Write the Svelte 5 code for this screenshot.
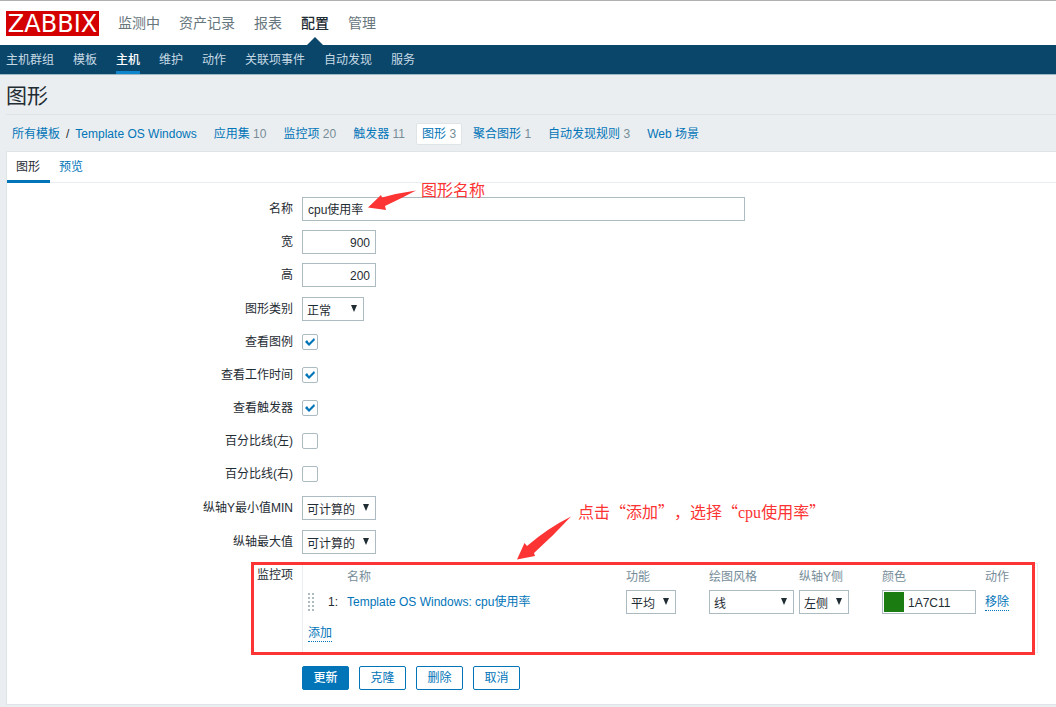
<script>
    const menu = ["监测中", "资产记录", "报表", "配置", "管理"];
    const submenu = ["主机群组", "模板", "主机", "维护", "动作", "关联项事件", "自动发现", "服务"];

    const sections = [
        { label: "应用集", count: 10 },
        { label: "监控项", count: 20 },
        { label: "触发器", count: 11 },
        { label: "图形", count: 3, selected: true },
        { label: "聚合图形", count: 1 },
        { label: "自动发现规则", count: 3 },
        { label: "Web 场景" },
    ];

    let name = "cpu使用率";
    let width = "900";
    let height = "200";
    let color = "1A7C11";

    let checks = [
        { id: "legend", label: "查看图例", checked: true },
        { id: "worktime", label: "查看工作时间", checked: true },
        { id: "triggers", label: "查看触发器", checked: true },
        { id: "percent-left", label: "百分比线(左)", checked: false },
        { id: "percent-right", label: "百分比线(右)", checked: false },
    ];
</script>

<div class="page" lang="zh-CN">
    <header class="top">
        <a class="logo" href="#home">ZABBIX</a>
        <nav class="menu">
            {#each menu as item}
                <a href="#menu" class:selected={item === "配置"}>{item}</a>
            {/each}
        </nav>
    </header>

    <nav class="submenu">
        {#each submenu as item}
            <a href="#submenu" class:selected={item === "主机"}>{item}</a>
        {/each}
    </nav>

    <main>
        <h1>图形</h1>

        <nav class="crumbs">
            <span class="path">
                <a href="#templates">所有模板</a>
                <span>/</span>
                <a href="#template">Template OS Windows</a>
            </span>
            {#each sections as section}
                <span class="section" class:selected={section.selected}>
                    <a href="#section">{section.label}</a>
                    {#if section.count}<span class="count">{section.count}</span>{/if}
                </span>
            {/each}
        </nav>

        <div class="card">
            <nav class="tabs">
                <a href="#graph" class="selected">图形</a>
                <a href="#preview">预览</a>
            </nav>

            <form on:submit|preventDefault>
                <div class="field">
                    <label for="name">名称</label>
                    <div class="control">
                        <input id="name" class="wide" type="text" bind:value={name} />
                        <div class="note note-name">
                            <svg width="48" height="20" viewBox="0 0 48 20" aria-hidden="true">
                                <path d="M0 17.5 L13 5 L14 7.5 Q30 3 48 0.5 Q34 8 17 16 L18 20 Z" />
                            </svg>
                            <span>图形名称</span>
                        </div>
                    </div>
                </div>
                <div class="field">
                    <label for="width">宽</label>
                    <div class="control"><input id="width" class="number" type="text" bind:value={width} /></div>
                </div>
                <div class="field">
                    <label for="height">高</label>
                    <div class="control"><input id="height" class="number" type="text" bind:value={height} /></div>
                </div>
                <div class="field with-select">
                    <label for="type">图形类别</label>
                    <div class="control">
                        <span class="select type"><select id="type"><option>正常</option></select></span>
                    </div>
                </div>

                {#each checks as check}
                    <div class="field">
                        <label for={check.id}>{check.label}</label>
                        <div class="control"><input id={check.id} type="checkbox" bind:checked={check.checked} /></div>
                    </div>
                {/each}

                <div class="field with-select">
                    <label for="ymin">纵轴Y最小值MIN</label>
                    <div class="control">
                        <span class="select axis"><select id="ymin"><option>可计算的</option></select></span>
                    </div>
                </div>
                <div class="field with-select">
                    <label for="ymax">纵轴最大值</label>
                    <div class="control">
                        <span class="select axis"><select id="ymax"><option>可计算的</option></select></span>
                    </div>
                </div>

                <div class="field items">
                    <span class="label" id="items-label">监控项</span>
                    <div class="box">
                        <table aria-labelledby="items-label">
                            <colgroup>
                                <col class="c-drag" />
                                <col class="c-num" />
                                <col />
                                <col class="c-func" />
                                <col class="c-style" />
                                <col class="c-side" />
                                <col class="c-color" />
                                <col class="c-action" />
                            </colgroup>
                            <thead>
                                <tr>
                                    <th></th>
                                    <th></th>
                                    <th>名称</th>
                                    <th>功能</th>
                                    <th>绘图风格</th>
                                    <th>纵轴Y侧</th>
                                    <th>颜色</th>
                                    <th>动作</th>
                                </tr>
                            </thead>
                            <tbody>
                                <tr>
                                    <td><span class="drag"></span></td>
                                    <td>1:</td>
                                    <td><a href="#item">Template OS Windows: cpu使用率</a></td>
                                    <td>
                                        <span class="select short"><select aria-label="功能"><option>平均</option></select></span>
                                    </td>
                                    <td>
                                        <span class="select style"><select aria-label="绘图风格"><option>线</option></select></span>
                                    </td>
                                    <td>
                                        <span class="select short"><select aria-label="纵轴Y侧"><option>左侧</option></select></span>
                                    </td>
                                    <td>
                                        <span class="color">
                                            <span class="swatch" style="background: #{color}"></span>
                                            <input type="text" aria-label="颜色" bind:value={color} />
                                        </span>
                                    </td>
                                    <td><button type="button" class="link">移除</button></td>
                                </tr>
                                <tr class="add">
                                    <td colspan="8"><button type="button" class="link">添加</button></td>
                                </tr>
                            </tbody>
                        </table>
                        <div class="note note-items">
                            <svg width="54" height="44" viewBox="0 0 54 44" aria-hidden="true">
                                <path d="M0 43.5 L7.5 27 L10 30 Q31 12 54 0.5 Q37 19 17 37 L18 40 Z" />
                            </svg>
                            <span>点击“添加”，选择“<i>cpu</i>使用率”</span>
                        </div>
                    </div>
                    <div class="frame"></div>
                </div>

                <div class="buttons">
                    <button type="submit" class="primary">更新</button>
                    <button type="button">克隆</button>
                    <button type="button">删除</button>
                    <button type="button">取消</button>
                </div>
            </form>
        </div>
    </main>
</div>

<style>
    :global(body) {
        background: #ebeef0;
    }

    .page {
        color: #1f2c33;
        font: 12px/24px "Liberation Sans", "Noto Sans CJK SC", sans-serif;
        padding-bottom: 3px;
    }

    * {
        box-sizing: border-box;
    }

    a {
        color: #0275b8;
        text-decoration: none;
    }

    input, select, button {
        font: inherit;
        color: inherit;
        margin: 0;
    }

    .top {
        display: flex;
        align-items: center;
        gap: 19px;
        height: 45px;
        padding: 0 6px;
        border-top: 1px solid #b0b0b0;
        background: #fff;
    }

    .logo {
        width: 93px;
        height: 25px;
        background: #d40000;
        color: #fff;
        font: 24px/26px "DejaVu Sans", sans-serif;
        text-align: center;
    }

    .menu {
        display: flex;
        gap: 19px;
        font-size: 14px;
        line-height: 44px;
    }

    .menu a {
        position: relative;
        color: #67757c;
    }

    .menu .selected {
        color: #1f2c33;
        font-weight: 500;
    }

    .menu .selected::after {
        content: "";
        position: absolute;
        left: 50%;
        bottom: 0;
        margin-left: -8px;
        border: 8px solid transparent;
        border-top: 0;
        border-bottom-color: #0a466a;
    }

    .submenu {
        display: flex;
        gap: 19px;
        height: 30px;
        padding: 0 6px;
        border-bottom: 1px solid #9fb6c4;
        background: #0a466a;
        line-height: 30px;
    }

    .submenu a {
        height: 29px;
        color: #c6dae5;
    }

    .submenu .selected {
        border-bottom: 3px solid #0f85cd;
        color: #fff;
        font-weight: 500;
    }

    main {
        padding-left: 6px;
    }

    h1 {
        margin: 0;
        height: 40px;
        border-bottom: 1px solid #dfe4e7;
        font-size: 21px;
        font-weight: 400;
        line-height: 42px;
    }

    .crumbs {
        display: flex;
        align-items: center;
        gap: 5px;
        height: 36px;
        padding-top: 2px;
        line-height: 20px;
        white-space: nowrap;
    }

    .path {
        display: flex;
        gap: 6px;
        padding: 0 6px;
    }

    .section {
        padding: 0 5px;
        border: 1px solid transparent;
        border-radius: 2px;
    }

    .section.selected {
        border-color: #dfe4e7;
        background: #fff;
    }

    .count {
        color: #768d99;
    }

    .card {
        border: 1px solid #dfe4e7;
        border-right: 0;
        background: #fff;
    }

    .tabs {
        display: flex;
        height: 31px;
        border-bottom: 1px solid #ebeef0;
        line-height: 30px;
    }

    .tabs a {
        height: 31px;
        padding: 0 10px 0 9px;
    }

    .tabs .selected {
        border-bottom: 3px solid #0275b8;
        color: #1f2c33;
    }

    form {
        display: flex;
        flex-direction: column;
        gap: 9px;
        padding: 14px 18px 14px 0;
    }

    .field {
        display: grid;
        grid-template-columns: 286px 1fr;
        column-gap: 9px;
        position: relative;
        min-height: 24px;
    }

    .with-select {
        padding-top: 1px;
    }

    .field > label,
    .label {
        text-align: right;
    }

    .control {
        display: flex;
        align-items: center;
        position: relative;
        height: 24px;
    }

    input[type="text"] {
        height: 24px;
        padding: 1px 5px 0;
        border: 1px solid #acbbc2;
        background: #fff;
    }

    .wide {
        width: 443px;
        max-width: 100%;
    }

    .number {
        width: 74px;
        text-align: right;
    }

    input[type="checkbox"] {
        appearance: none;
        width: 16px;
        height: 16px;
        border: 1px solid #acbbc2;
        border-radius: 2px;
        background: #fff;
    }

    input[type="checkbox"]:checked::before {
        content: "";
        display: block;
        width: 14px;
        height: 14px;
        background: #0275b8;
        clip-path: polygon(2px 7px, 4px 5px, 6px 8px, 11px 3px, 12px 5px, 6px 11px);
    }

    .select {
        display: inline-block;
        position: relative;
        height: 24px;
        vertical-align: top;
    }

    .select::after {
        content: "";
        position: absolute;
        top: 8px;
        right: 7px;
        border: 3px solid transparent;
        border-top: 7px solid #1f2c33;
        border-bottom: 0;
        pointer-events: none;
    }

    .select select {
        appearance: none;
        width: 100%;
        height: 24px;
        padding: 1px 4px 0;
        border: 1px solid #acbbc2;
        border-radius: 0;
        background: #fff;
    }

    .type {
        width: 62px;
    }

    .axis {
        width: 74px;
    }

    .short {
        width: 50px;
    }

    .style {
        width: 85px;
    }

    .box {
        position: relative;
        padding-left: 5px;
        border: 1px solid #ebeef0;
    }

    table {
        width: 100%;
        table-layout: fixed;
        border-collapse: collapse;
    }

    th, td {
        height: 24px;
        padding: 0;
        text-align: left;
        vertical-align: middle;
        white-space: nowrap;
    }

    th {
        height: 26px;
        color: #768d99;
        font-weight: 400;
    }

    .add td {
        height: 38px;
    }

    .c-drag {
        width: 20px;
    }

    .c-num {
        width: 19px;
    }

    .c-func,
    .c-side {
        width: 83px;
    }

    .c-style {
        width: 90px;
    }

    .c-color {
        width: 103px;
    }

    .c-action {
        width: 52px;
    }

    .drag {
        display: block;
        width: 6px;
        height: 18px;
        background: conic-gradient(from 270deg at 2px 2px, #acbbc2 90deg, transparent 0) 0 0 / 4px 4px;
    }

    .color {
        display: flex;
        position: relative;
        width: 94px;
    }

    .color input[type="text"] {
        width: 100%;
        padding-left: 25px;
    }

    .swatch {
        position: absolute;
        top: 2px;
        left: 2px;
        width: 20px;
        height: 20px;
    }

    .link {
        padding: 0;
        border: 0;
        border-bottom: 1px dotted #0275b8;
        background: none;
        color: #0275b8;
        line-height: 15px;
    }

    .frame {
        position: absolute;
        top: -1px;
        right: 3px;
        bottom: -2px;
        left: 244px;
        border: 3px solid #fc3434;
        pointer-events: none;
    }

    .note {
        display: flex;
        position: absolute;
        color: #fc3434;
        font: 16px/20px "Noto Sans CJK SC", sans-serif;
        text-spacing-trim: space-all;
        white-space: nowrap;
        pointer-events: none;
    }

    .note svg {
        fill: #fc3434;
    }

    .note i {
        font-family: "Liberation Serif", serif;
        font-style: normal;
    }

    .note-name {
        top: -7px;
        left: 66px;
        gap: 5px;
    }

    .note-name span {
        margin-top: -11px;
    }

    .note-items {
        top: -48px;
        left: 214px;
        gap: 7px;
    }

    .note-items span {
        margin-top: -15px;
    }

    .buttons {
        display: flex;
        gap: 10px;
        padding: 4px 0 0 295px;
    }

    .buttons button {
        width: 47px;
        height: 24px;
        padding: 0;
        border: 1px solid #0275b8;
        border-radius: 2px;
        background: #fff;
        color: #0275b8;
        line-height: 22px;
    }

    .buttons .primary {
        background: #0275b8;
        color: #fff;
        font-weight: 500;
    }
</style>
